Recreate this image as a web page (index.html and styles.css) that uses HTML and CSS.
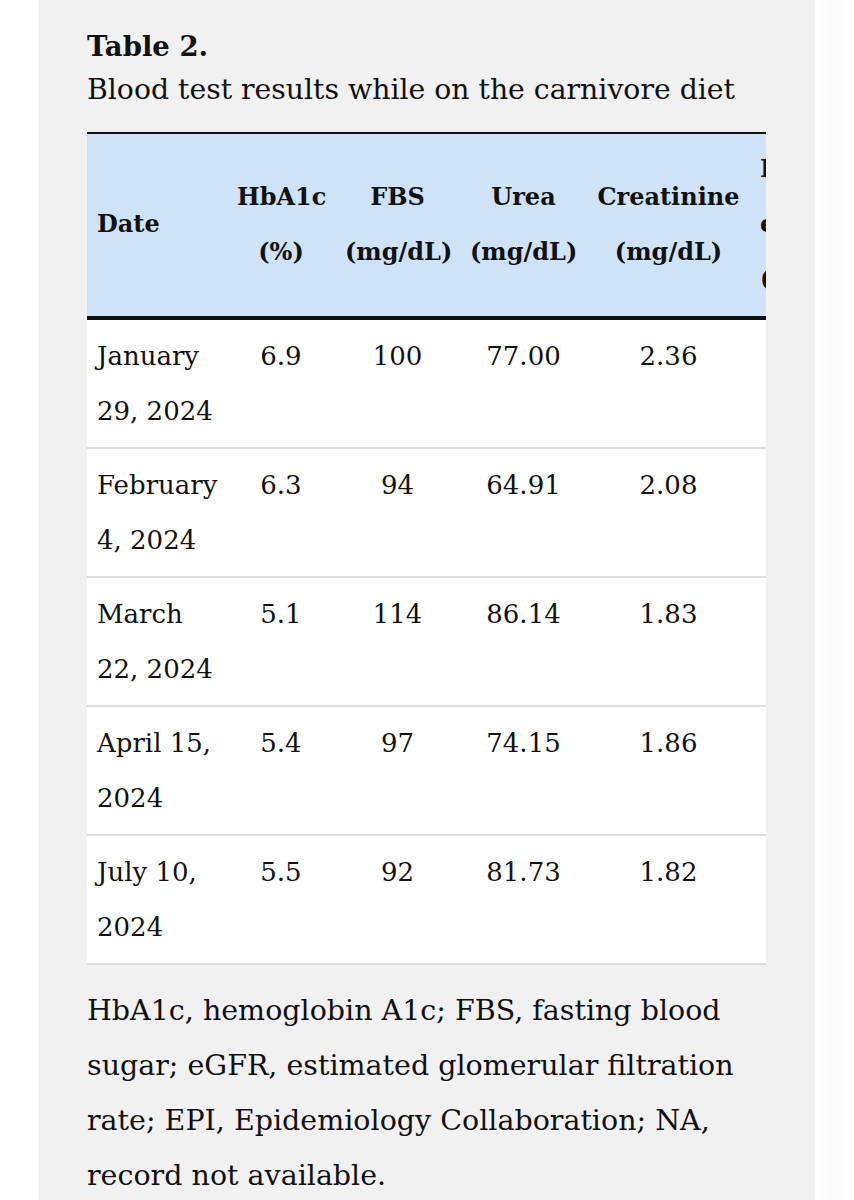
FILE: index.html
```html
<!DOCTYPE html>
<html lang="en">
<head>
<meta charset="utf-8">
<title>Table 2. Blood test results while on the carnivore diet</title>
<link rel="stylesheet" href="styles.css">
</head>
<body>
<div class="panel">
  <div class="caption">
    <div class="label">Table 2.</div>
    <div class="title">Blood test results while on the carnivore diet</div>
  </div>
  <div class="table-wrap">
    <table class="data">
      <colgroup>
        <col class="c-date">
        <col class="c-hba">
        <col class="c-fbs">
        <col class="c-urea">
        <col class="c-creat">
        <col class="c-egfr">
      </colgroup>
      <thead>
        <tr>
          <th class="left">Date</th>
          <th>HbA1c<br>(%)</th>
          <th>FBS<br>(mg/dL)</th>
          <th>Urea<br>(mg/dL)</th>
          <th>Creatinine<br>(mg/dL)</th>
          <th class="left">EPI<br>eGFR<br>(mL/min)</th>
        </tr>
      </thead>
      <tbody>
        <tr><td class="left">January 29, 2024</td><td>6.9</td><td>100</td><td>77.00</td><td>2.36</td><td>27</td></tr>
        <tr><td class="left">February 4, 2024</td><td>6.3</td><td>94</td><td>64.91</td><td>2.08</td><td>31</td></tr>
        <tr><td class="left">March 22, 2024</td><td>5.1</td><td>114</td><td>86.14</td><td>1.83</td><td>36</td></tr>
        <tr><td class="left">April 15, 2024</td><td>5.4</td><td>97</td><td>74.15</td><td>1.86</td><td>35</td></tr>
        <tr><td class="left">July 10, 2024</td><td>5.5</td><td>92</td><td>81.73</td><td>1.82</td><td>36</td></tr>
      </tbody>
    </table>
  </div>
  <p class="footnote">HbA1c, hemoglobin A1c; FBS, fasting blood sugar; eGFR, estimated glomerular filtration rate; EPI, Epidemiology Collaboration; NA, record not available.</p>
</div>
</body>
</html>
```

FILE: styles.css
```css
html, body {
  margin: 0;
  padding: 0;
}

body {
  background: linear-gradient(to right, #ffffff 0, #ffffff 815px, #fafafa 835px, #ffffff 854px);
  font-family: "DejaVu Serif", "Liberation Serif", serif;
  color: #111;
}

.panel {
  box-sizing: border-box;
  margin-left: 39px;
  width: 776px;
  min-height: 1200px;
  background: #f1f1f1;
  padding: 25px 49px 0 48px;
}

.caption {
  font-size: 28.3px;
  line-height: 43px;
}

.label {
  font-weight: bold;
  font-size: 27.5px;
}

.title {
  font-weight: normal;
  white-space: nowrap;
}

.table-wrap {
  margin-top: 21px;
  width: 679px;
  overflow: hidden;
}

.data {
  border-collapse: collapse;
  table-layout: fixed;
  width: 843px;
  font-size: 26px;
  line-height: 54.5px;
}

.c-date { width: 140px; }
.c-hba { width: 108px; }
.c-fbs { width: 125px; }
.c-urea { width: 127px; }
.c-creat { width: 163px; }
.c-egfr { width: 180px; }

.data thead tr {
  background: #cfe2f6;
  border-top: 2px solid #111;
  border-bottom: 4px solid #111;
}

.data th {
  font-size: 24px;
  font-weight: bold;
  text-align: center;
  vertical-align: middle;
  padding: 7px 10px 10px;
  line-height: 55px;
  white-space: nowrap;
}

.data th.left,
.data td.left {
  text-align: left;
}

.data tbody tr {
  background: #ffffff;
  border-bottom: 2px solid #dddddd;
}

.data td {
  text-align: center;
  vertical-align: top;
  padding: 9px 10px;
}

.footnote {
  margin: 18px 0 0;
  font-size: 28.5px;
  line-height: 55px;
}
```
